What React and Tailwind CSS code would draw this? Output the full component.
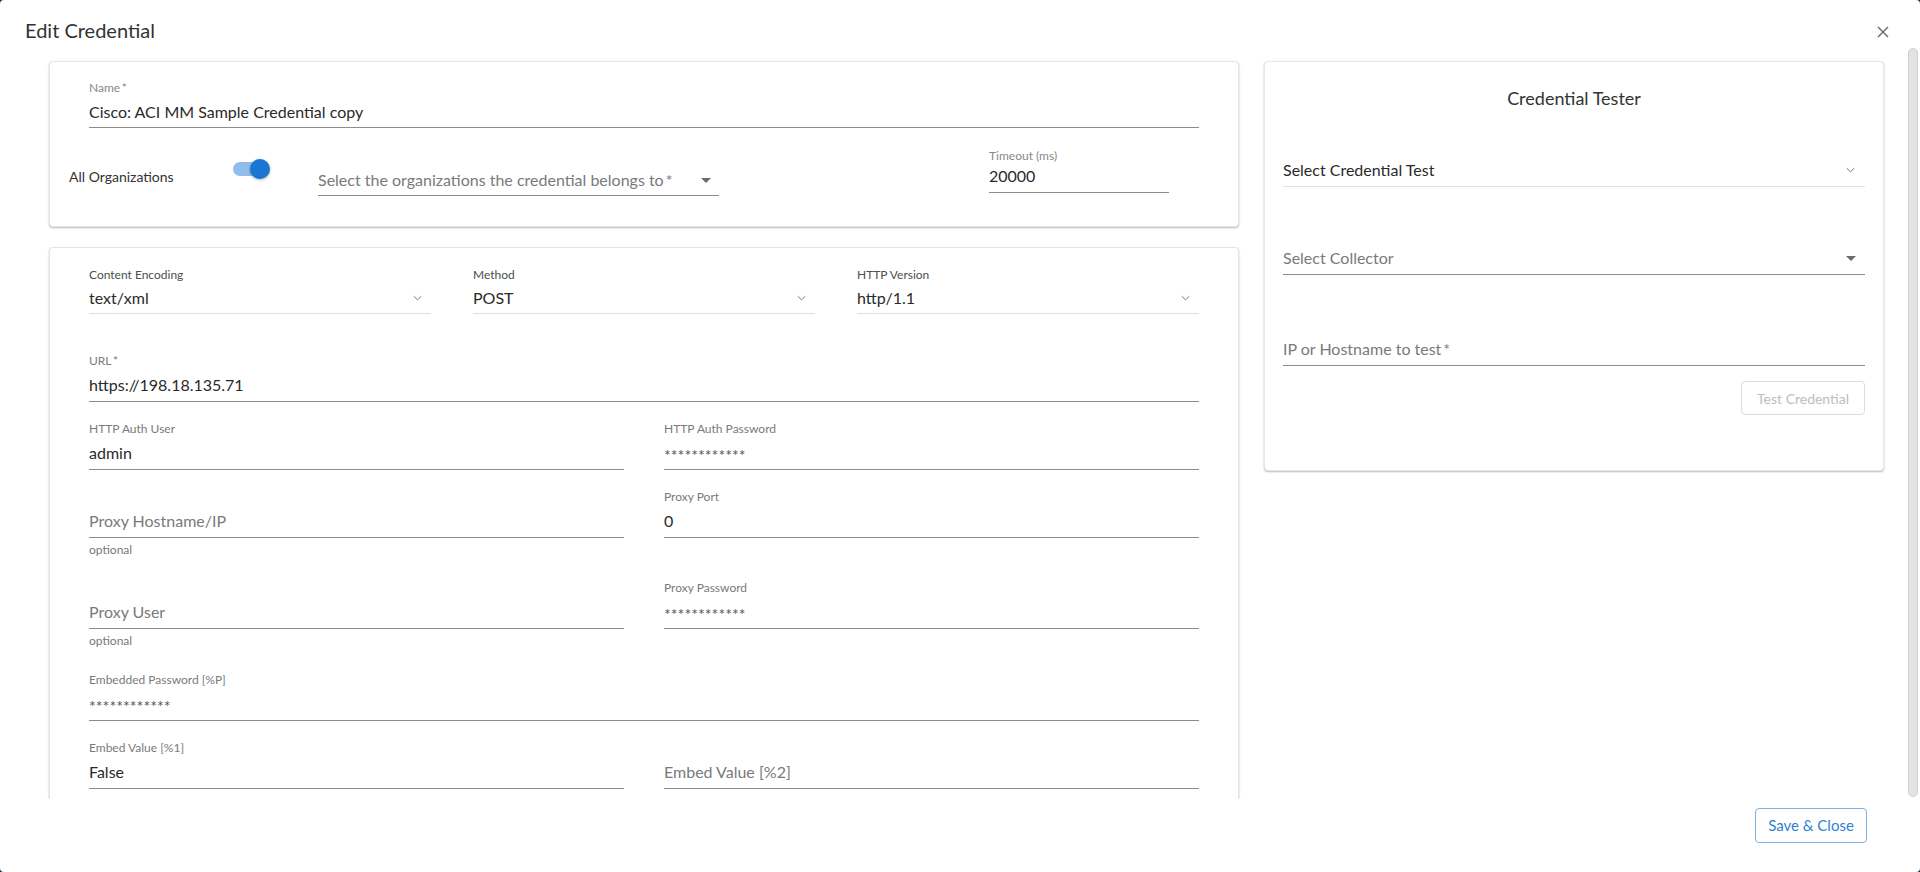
import React from "react";

function Chevron() {
  return (
    <svg width="9" height="6" viewBox="0 0 9 6" className="shrink-0">
      <path d="M0.8 1.2 L4.5 4.8 L8.2 1.2" fill="none" stroke="#7a7a7a" strokeWidth="1" />
    </svg>
  );
}

function Triangle() {
  return (
    <svg width="10" height="5" viewBox="0 0 10 5" className="shrink-0">
      <path d="M0 0 H10 L5 5 Z" fill="#6b6b6b" />
    </svg>
  );
}

function SelectField({ label, value }) {
  return (
    <div className="flex flex-col">
      <div className="h-4 text-[12px] leading-4 text-[#4d4d4d] whitespace-nowrap">{label}</div>
      <div className="h-[31px] flex items-center justify-between border-b border-[#e0e0e0] pr-[9px]">
        <span className="text-[16px] text-[#2a2a2a]">{value}</span>
        <Chevron />
      </div>
    </div>
  );
}

function Stars() {
  return <span className="mt-[4px] text-[16px] text-[#555]">************</span>;
}

function Field({ label, value, placeholder, password, helper }) {
  return (
    <div className="flex flex-col">
      <div className="h-4 text-[12px] leading-4 text-[#7a7a7a] whitespace-nowrap">{label}</div>
      <div className="h-[33px] flex items-center border-b border-[#8c8c8c]">
        {password ? (
          <Stars />
        ) : value ? (
          <span className="text-[16px] text-[#2a2a2a]">{value}</span>
        ) : (
          <span className="text-[16px] text-[#7a7a7a]">{placeholder}</span>
        )}
      </div>
      {helper ? <div className="mt-[4px] h-4 text-[12px] leading-4 text-[#777]">optional</div> : null}
    </div>
  );
}

export default function App() {
  return (
    <div className="w-full h-[872px] bg-[#1d3147] font-['Lato',sans-serif]">
      <div className="w-full h-full bg-white rounded-[4px] flex flex-col overflow-hidden">
        {/* Header */}
        <div className="h-[48px] shrink-0 flex items-start justify-between pl-[25px] pr-[31px] pt-[18px]">
          <div className="text-[20px] leading-6 text-[#333]">Edit Credential</div>
          <svg width="12" height="12" viewBox="0 0 12 12" className="mt-[8px]">
            <path d="M1 1 L11 11 M11 1 L1 11" stroke="#666" strokeWidth="1.4" />
          </svg>
        </div>

        {/* Body */}
        <div className="h-[751px] shrink-0 flex">
          <div className="flex-1 overflow-hidden pl-[49px] pt-[13px] flex items-start gap-[25px]">
            {/* Left column */}
            <div className="w-[1190px] shrink-0 flex flex-col gap-[20px]">
              {/* Card 1 */}
              <div className="border border-[#e6e6e6] rounded-[4px] shadow-[0_1px_2px_rgba(0,0,0,0.28)] bg-white pt-[18px] px-[19px]">
                <div className="mx-[20px] flex flex-col">
                  <div className="h-4 text-[12px] leading-4 text-[#888]">Name&thinsp;*</div>
                  <div className="h-[32px] flex items-center border-b border-[#8c8c8c]">
                    <span className="text-[16px] text-[#2a2a2a]">Cisco: ACI MM Sample Credential copy</span>
                  </div>
                </div>
                <div className="h-[98px] flex items-start">
                  <div className="w-[164px] mt-[39px] text-[14px] leading-5 text-[#333]">All Organizations</div>
                  <div className="relative w-[37px] h-5 mt-[31px]">
                    <div className="absolute left-0 top-[3px] w-[34px] h-[14px] rounded-full bg-[#8fbcea]" />
                    <div className="absolute left-[17px] top-0 w-5 h-5 rounded-full bg-[#1976d2] shadow-[0_1px_3px_rgba(0,0,0,0.3)]" />
                  </div>
                  <div className="ml-[48px] w-[401px] mt-[37px] h-[31px] flex items-center justify-between border-b border-[#8c8c8c] pr-[8px]">
                    <span className="text-[16px] text-[#7a7a7a]">Select the organizations the credential belongs to&thinsp;*</span>
                    <Triangle />
                  </div>
                  <div className="ml-[270px] w-[180px] mt-[20px] flex flex-col">
                    <div className="h-4 text-[12px] leading-4 text-[#888]">Timeout (ms)</div>
                    <div className="h-[29px] pb-[4px] flex items-center border-b border-[#8c8c8c]">
                      <span className="text-[16px] text-[#2a2a2a]">20000</span>
                    </div>
                  </div>
                </div>
              </div>

              {/* Card 2 */}
              <div className="border border-[#e6e6e6] rounded-[4px] shadow-[0_1px_2px_rgba(0,0,0,0.28)] bg-white pt-[19px] px-[39px] pb-[120px]">
                <div className="grid grid-cols-3 gap-x-[42px]">
                  <SelectField label="Content Encoding" value="text/xml" />
                  <SelectField label="Method" value="POST" />
                  <SelectField label="HTTP Version" value="http/1.1" />
                </div>
                <div className="mt-[39px]">
                  <Field label={<>URL&thinsp;*</>} value="https://198.18.135.71" />
                </div>
                <div className="mt-[19px] grid grid-cols-2 gap-x-[40px] items-start">
                  <Field label="HTTP Auth User" value="admin" />
                  <Field label="HTTP Auth Password" password />
                </div>
                <div className="mt-[19px] grid grid-cols-2 gap-x-[40px] items-start">
                  <Field label="" placeholder="Proxy Hostname/IP" helper />
                  <Field label="Proxy Port" value="0" />
                </div>
                <div className="mt-[22px] grid grid-cols-2 gap-x-[40px] items-start">
                  <Field label="" placeholder="Proxy User" helper />
                  <Field label="Proxy Password" password />
                </div>
                <div className="mt-[23px]">
                  <Field label="Embedded Password [%P]" password />
                </div>
                <div className="mt-[19px] grid grid-cols-2 gap-x-[40px] items-start">
                  <Field label="Embed Value [%1]" value="False" />
                  <Field label="" placeholder="Embed Value [%2]" />
                </div>
              </div>
            </div>

            {/* Right column: Credential Tester */}
            <div className="w-[620px] shrink-0 border border-[#e6e6e6] rounded-[4px] shadow-[0_1px_2px_rgba(0,0,0,0.28)] bg-white pt-[24px] px-[18px] pb-[55px] flex flex-col">
              <div className="text-center text-[18px] leading-6 text-[#333]">Credential Tester</div>
              <div className="mt-[44px] h-[33px] flex items-center justify-between border-b border-[#e0e0e0] pr-[10px]">
                <span className="text-[16px] text-[#2a2a2a]">Select Credential Test</span>
                <Chevron />
              </div>
              <div className="mt-[55px] h-[33px] flex items-center justify-between border-b border-[#8c8c8c] pr-[9px]">
                <span className="text-[16px] text-[#7a7a7a]">Select Collector</span>
                <Triangle />
              </div>
              <div className="mt-[58px] h-[33px] flex items-center border-b border-[#8c8c8c]">
                <span className="text-[16px] text-[#7a7a7a]">IP or Hostname to test&thinsp;*</span>
              </div>
              <div className="mt-[15px] flex justify-end">
                <div className="w-[124px] h-[34px] flex items-center justify-center border border-[#dcdcdc] rounded-[4px] text-[14px] text-[#bdbdbd]">
                  Test Credential
                </div>
              </div>
            </div>
          </div>

          {/* Scrollbar */}
          <div className="w-[12px] shrink-0 pr-[2px] pb-[2px]">
            <div className="w-[10px] h-full rounded-full bg-[#e3e3e3] border border-[#cfcfcf]" />
          </div>
        </div>

        {/* Footer */}
        <div className="flex-1 flex justify-end items-start pt-[9px] pr-[53px]">
          <div className="w-[112px] h-[35px] flex items-center justify-center border border-[#7fb0e3] rounded-[4px] text-[15px] text-[#2f7fd0]">
            Save &amp; Close
          </div>
        </div>
      </div>
    </div>
  );
}
